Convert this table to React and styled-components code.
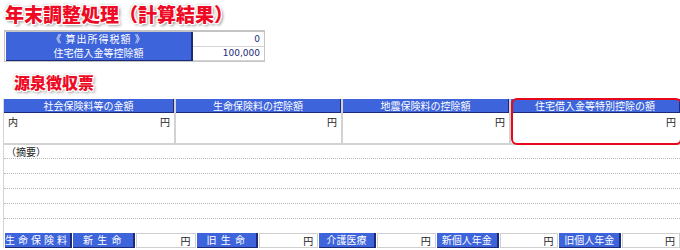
import React from 'react';
import styled, { createGlobalStyle } from 'styled-components';

const GlobalStyle = createGlobalStyle`
  body {
    margin: 0;
    background: #fff;
    font-family: "Noto Sans CJK JP", "Noto Sans", sans-serif;
  }
`;

const blue = '#3d64da';
const navy = '#1c2a78';

const Page = styled.div`
  width: 680px;
  height: 250px;
  padding: 4px 2px 0 3px;
  box-sizing: border-box;
  overflow: hidden;
`;

const Title = styled.h1`
  margin: ${props => props.$margin};
  font-size: ${props => props.$size}px;
  line-height: 20px;
  font-weight: 900;
  color: #ee0a24;
  text-shadow: 1px 0 #fff, -1px 0 #fff, 0 1px #fff, 0 -1px #fff, 1px 1px #fff,
    -1px -1px #fff, 1px -1px #fff, -1px 1px #fff, 2px 2px 3px #8a8a8a,
    -1px -1px 3px #bbb;
`;

const Summary = styled.div`
  width: 258px;
  margin: 6px 0 0 1px;
  border: 1px solid #c4c4c4;
  border-top: 2px solid #c4c4c4;
  padding: 0 0 1px 1px;
`;

const SummaryRow = styled.div`
  display: grid;
  grid-template-columns: 187px 1fr;
  height: 14px;
`;

const BlueLabel = styled.div`
  background: ${blue};
  color: #fff;
  font-size: 10px;
  line-height: 13px;
  text-align: center;
  border-right: 2px solid ${navy};
  border-bottom: 1px solid ${navy};
  letter-spacing: ${props => props.$spacing || 0}px;
`;

const Value = styled.div`
  color: ${navy};
  font-family: "DejaVu Sans", sans-serif;
  font-size: 9px;
  line-height: 14px;
  text-align: right;
  padding-right: 4px;
  border-bottom: 1px solid #d4d4d4;
`;

const Sheet = styled.div`
  margin-top: 7px;
  border-left: 1px solid #d6d6d6;
  border-right: 1px solid #c8c8c8;
  width: 676px;
`;

const Columns = styled.div`
  display: grid;
  grid-template-columns: 170px 167px 168px 1fr;
  border-bottom: 2px solid #d2d2d2;
`;

const Column = styled.div`
  position: relative;
  display: flex;
  flex-direction: column;
  border-left: ${props => (props.$first ? 'none' : '2px solid #d2d2d2')};
`;

const ColHead = styled.div`
  height: 13px;
  background: ${blue};
  border-bottom: 1px solid ${navy};
  border-right: 1px solid ${navy};
  color: #fff;
  font-size: 10px;
  line-height: 13px;
  text-align: center;
`;

const ColBody = styled.div`
  height: 28px;
  display: flex;
  justify-content: space-between;
  padding: 2px 4px 0;
  font-size: 10px;
  line-height: 13px;
  color: #222;
`;

const Highlight = styled.div`
  position: absolute;
  top: -1px;
  left: 0;
  right: -2px;
  bottom: -2px;
  border: 2px solid #e8081c;
  border-radius: 6px;
  pointer-events: none;
`;

const Memo = styled.div`
  display: flex;
  flex-direction: column;
  height: 88px;
`;

const MemoLabel = styled.div`
  font-size: 10px;
  line-height: 12px;
  color: #222;
  padding: 1px 0 0 2px;
  height: 12px;
  border-bottom: 1px dotted #b8b8b8;
`;

const MemoLine = styled.div`
  height: 14px;
  border-bottom: 1px dotted #b8b8b8;
`;

const Bottom = styled.div`
  display: flex;
  gap: 1px;
  padding-left: 1px;
  height: 15px;
`;

const Tag = styled.div`
  width: ${props => props.$w}px;
  background: ${blue};
  color: #fff;
  font-size: 10px;
  line-height: 14px;
  text-align: ${props => props.$align || 'center'};
  padding-left: ${props => props.$pad || 0}px;
  box-sizing: border-box;
  border-right: 2px solid ${navy};
  border-bottom: 1px solid ${navy};
  letter-spacing: ${props => props.$spacing || 0}px;
  white-space: nowrap;
`;

const Field = styled.div`
  width: ${props => props.$w}px;
  box-sizing: border-box;
  border: 1px solid #cfcfcf;
  font-size: 10px;
  line-height: 13px;
  text-align: right;
  padding-right: 4px;
  color: #222;
`;

const columns = [
  { head: '社会保険料等の金額', left: '内' },
  { head: '生命保険料の控除額' },
  { head: '地震保険料の控除額' },
  { head: '住宅借入金等特別控除の額', mark: true },
];

const App = () => (
  <Page>
    <GlobalStyle />
    <Title $size={19} $margin="0 0 0 2px">年末調整処理（計算結果）</Title>
    <Summary>
      <SummaryRow>
        <BlueLabel $spacing={1}>《 算出所得税額 》</BlueLabel>
        <Value>0</Value>
      </SummaryRow>
      <SummaryRow>
        <BlueLabel>住宅借入金等控除額</BlueLabel>
        <Value>100,000</Value>
      </SummaryRow>
    </Summary>
    <Title $size={16} $margin="10px 0 0 11px">源泉徴収票</Title>
    <Sheet>
      <Columns>
        {columns.map((c, i) => (
          <Column key={c.head} $first={i === 0}>
            <ColHead>{c.head}</ColHead>
            <ColBody>
              <span>{c.left || ''}</span>
              <span>円</span>
            </ColBody>
            {c.mark && <Highlight />}
          </Column>
        ))}
      </Columns>
      <Memo>
        <MemoLabel>（摘要）</MemoLabel>
        <MemoLine />
        <MemoLine />
        <MemoLine />
        <MemoLine />
      </Memo>
      <Bottom>
        <Tag $w={67} $spacing={3}>生命保険料</Tag>
        <Tag $w={62} $align="left" $pad={10} $spacing={1}>新 生 命</Tag>
        <Field $w={60}>円</Field>
        <Tag $w={62} $align="left" $pad={10} $spacing={1}>旧 生 命</Tag>
        <Field $w={59}>円</Field>
        <Tag $w={57}>介護医療</Tag>
        <Field $w={59}>円</Field>
        <Tag $w={62}>新個人年金</Tag>
        <Field $w={59}>円</Field>
        <Tag $w={62}>旧個人年金</Tag>
        <Field $w={58}>円</Field>
      </Bottom>
    </Sheet>
  </Page>
);

export default App;
